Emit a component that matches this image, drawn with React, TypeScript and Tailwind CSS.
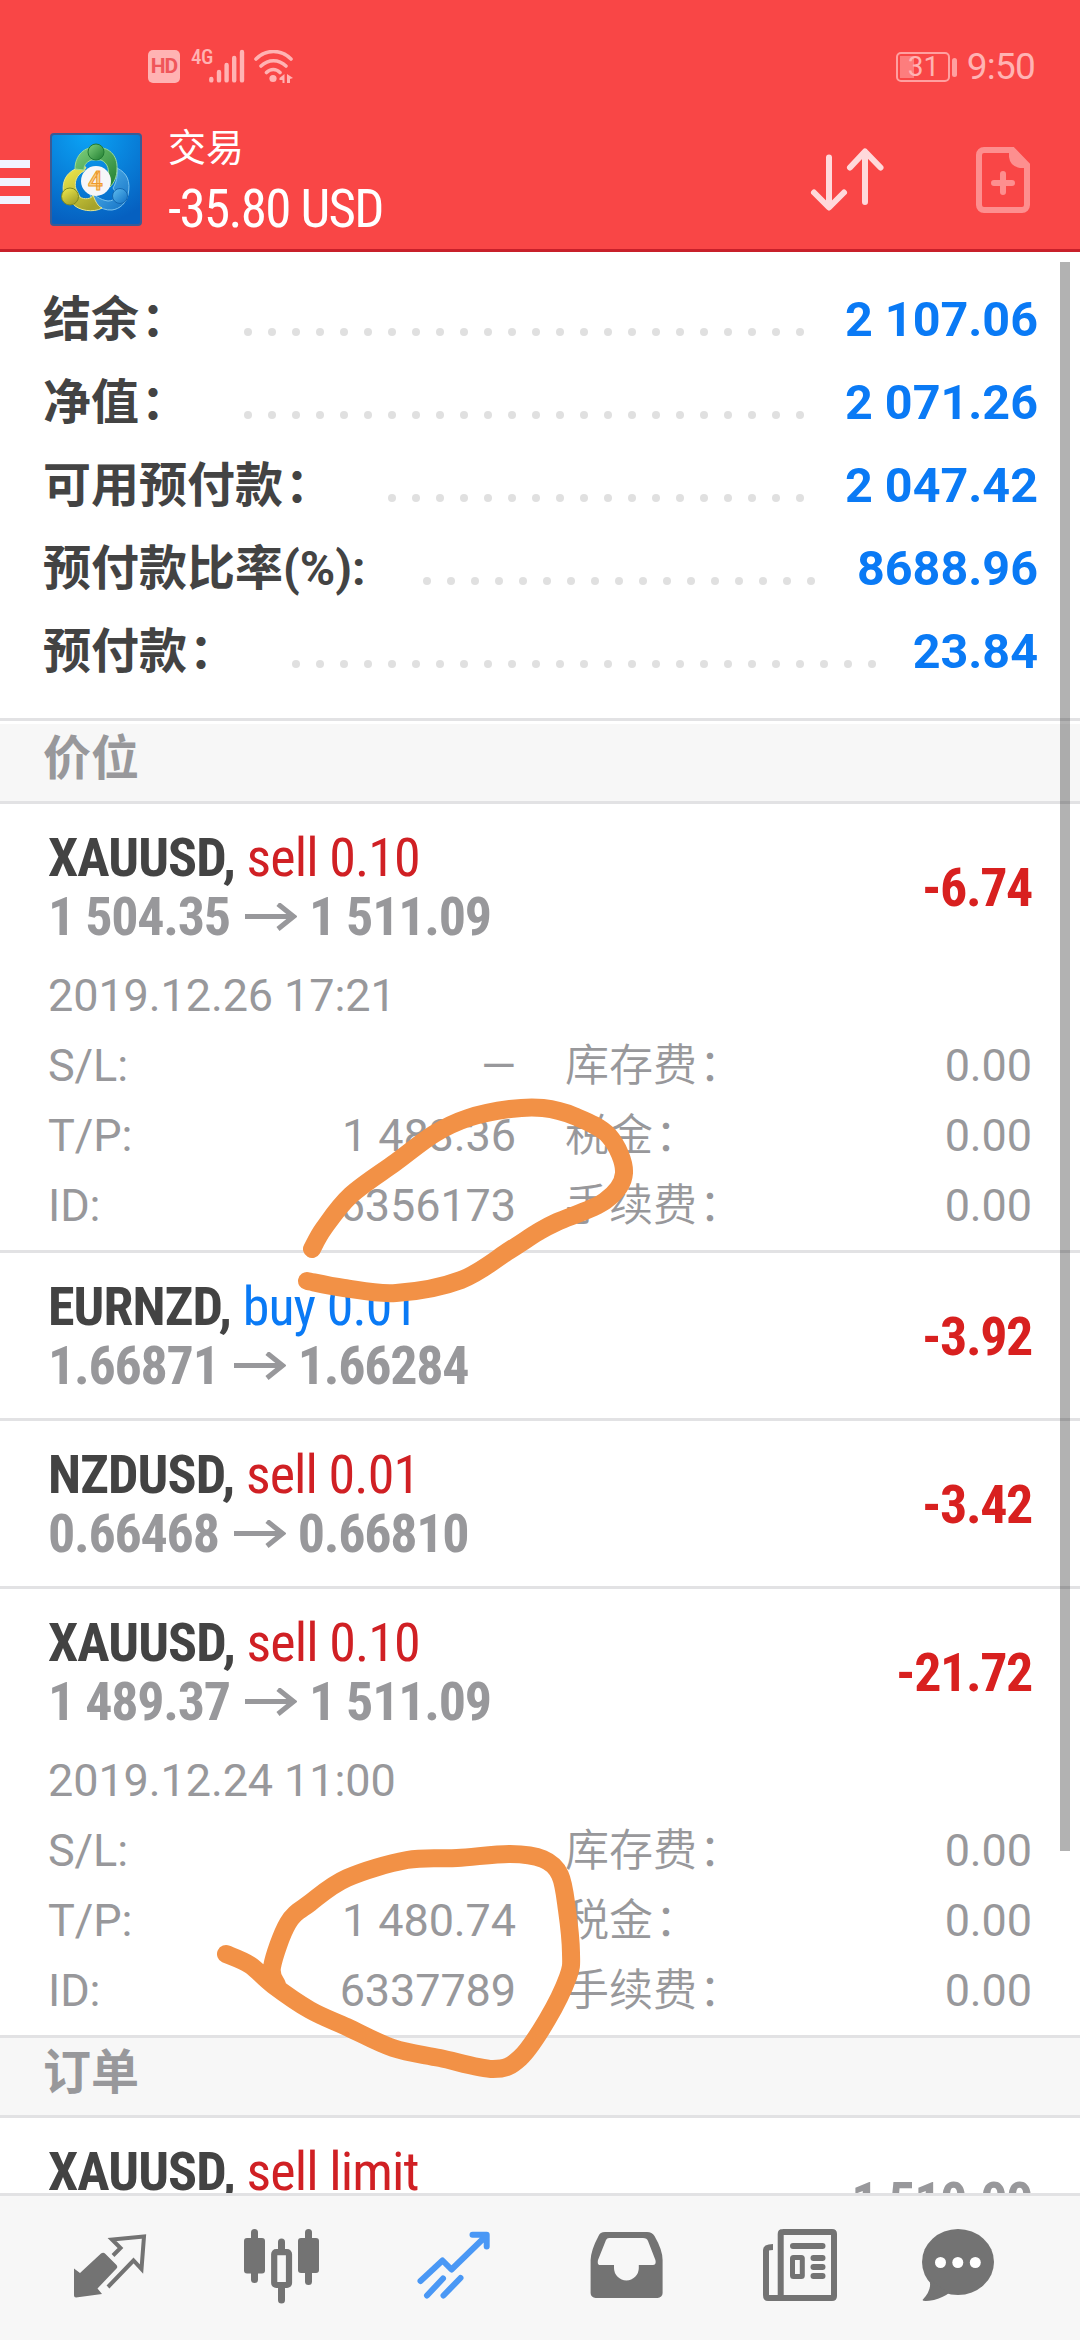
import React from 'react';

interface Position {
    id: string;
    symbol: string;
    side: 'buy' | 'sell';
    volume: string;
    open: string;
    current: string;
    profit: string;
    details?: {
        time: string;
        stopLoss: string;
        takeProfit: string;
    };
}

const summary = [
    { label: '结余：', value: '2 107.06', dots: 24 },
    { label: '净值：', value: '2 071.26', dots: 24 },
    { label: '可用预付款：', value: '2 047.42', dots: 18 },
    { label: '预付款比率(%):', value: '8688.96', dots: 17 },
    { label: '预付款：', value: '23.84', dots: 25 },
];

const positions: Position[] = [
    {
        id: '6356173', symbol: 'XAUUSD', side: 'sell', volume: '0.10', open: '1 504.35', current: '1 511.09', profit: '-6.74',
        details: { time: '2019.12.26 17:21', stopLoss: '—', takeProfit: '1 483.36' },
    },
    { id: '6349001', symbol: 'EURNZD', side: 'buy', volume: '0.01', open: '1.66871', current: '1.66284', profit: '-3.92' },
    { id: '6349002', symbol: 'NZDUSD', side: 'sell', volume: '0.01', open: '0.66468', current: '0.66810', profit: '-3.42' },
    {
        id: '6337789', symbol: 'XAUUSD', side: 'sell', volume: '0.10', open: '1 489.37', current: '1 511.09', profit: '-21.72',
        details: { time: '2019.12.24 11:00', stopLoss: '', takeProfit: '1 480.74' },
    },
];

// Freehand marks, listed as the points the pen went through
const marks: number[][][] = [
    [
        [312, 1249], [324, 1228], [351, 1195], [396, 1162], [434, 1134], [468, 1118], [510, 1109], [543, 1108], [574, 1116],
        [609, 1136], [624, 1173], [605, 1201], [557, 1222], [538, 1232], [510, 1250], [461, 1280], [396, 1293], [344, 1288], [307, 1281],
    ],
    [
        [226, 1954], [250, 1965], [273, 1985], [310, 2010], [347, 2027], [393, 2048], [440, 2058], [493, 2069], [520, 2058],
        [547, 2020], [568, 1977], [571, 1953], [567, 1910], [560, 1875], [543, 1859], [510, 1854], [457, 1858], [407, 1860],
        [347, 1878], [310, 1903], [288, 1923], [272, 1967], [277, 1985],
    ],
];

const smooth = (pts: number[][]) => {
    let d = `M${pts[0][0]} ${pts[0][1]}`;
    for (let i = 0; i < pts.length - 1; i++) {
        const p0 = pts[i - 1] || pts[i];
        const p1 = pts[i];
        const p2 = pts[i + 1];
        const p3 = pts[i + 2] || p2;
        d += ` C${p1[0] + (p2[0] - p0[0]) / 6} ${p1[1] + (p2[1] - p0[1]) / 6} ${p2[0] - (p3[0] - p1[0]) / 6} ${p2[1] - (p3[1] - p1[1]) / 6} ${p2[0]} ${p2[1]}`;
    }
    return d;
};

const StatusBar = () => (
    <div className="flex h-[100px] items-start pl-[148px] pr-[45px] text-[#ffb3b3]">
        <div className="mt-[50px] flex h-[33px] w-8 items-center justify-center rounded-[5px] bg-[#ffb3b3] text-[21px] leading-none font-bold tracking-[-1px] text-[#f0565a]">
            HD
        </div>
        <span className="mt-[49px] ml-[11px] w-[18px] text-[21px] leading-[16px] font-medium tracking-[-0.5px] font-stretch-75%">4G</span>
        <svg className="mt-[49px]" width="36" height="34" viewBox="0 0 36 34" stroke="currentColor" strokeWidth="4.4" strokeLinecap="round">
            <path d="M2.300 30v1.400M10 23v8.400M17.600 16v15.400M25.200 9v22.400M33 3v28.400" />
        </svg>
        <svg className="mt-[50px] ml-[9px]" width="40" height="34" viewBox="0 0 40 34" fill="none" stroke="currentColor" strokeWidth="3.6" strokeLinecap="round">
            <path d="M2 9C12-1 27-1 37 9M7 16C14.500 9 24.500 9 32 16M12.500 22.500c4-4 9.500-4 13.500 0" />
            <circle cx="19" cy="28.500" r="3.600" fill="currentColor" stroke="none" />
            <path d="M30.500 24v9h-2v-3h-3v-2zM33 24l6 4-3 1v4h-3z" fill="currentColor" stroke="none" />
        </svg>
        <div className="flex-1" />
        <div className="mt-[52px] flex h-[30px] w-[54px] rounded-[5px] border-2 border-[#ffa0a0] p-[2px]">
            <div className="flex w-[14px] items-center bg-[#fd7d7d] pl-[8px] text-[28px] leading-none">31</div>
        </div>
        <div className="mt-[58px] ml-[2px] h-[19px] w-[5px] rounded-sm bg-[#ffa0a0]" />
        <span className="mt-[46px] ml-[10px] text-[37px] leading-[42px] tracking-[-0.8px]">9:50</span>
    </div>
);

const AppLogo = () => (
    <svg className="mt-[33px] ml-5" width="92" height="94" viewBox="0 0 92 94">
        <defs>
            <radialGradient id="sky" cx="0.4" cy="0" r="1">
                <stop offset="0" stopColor="#0ba4f6" />
                <stop offset="1" stopColor="#0660c0" />
            </radialGradient>
            <linearGradient id="green" x1="0" y1="0" x2="1" y2="1"><stop offset="0" stopColor="#7fd07c" /><stop offset="1" stopColor="#1f7d30" /></linearGradient>
            <linearGradient id="yellow" x1="0" y1="0" x2="0.6" y2="1"><stop offset="0" stopColor="#f3ec4e" /><stop offset="1" stopColor="#a5a32a" /></linearGradient>
            <linearGradient id="blue" x1="0" y1="0" x2="1" y2="1"><stop offset="0" stopColor="#5dbdf0" /><stop offset="1" stopColor="#1270c4" /></linearGradient>
        </defs>
        <rect x="1" y="1" width="90" height="91" rx="3" fill="url(#sky)" stroke="#3a5b94" strokeWidth="2" />
        <path d="M78 62C81 48 77 40 67 35C68 44 66 50 63 55C68 62 66 68 58 68C50 67 44 62 39 57C40 68 50 78 62 77C70 76 76 70 78 62z" fill="url(#blue)" stroke="#7cc4ee" />
        <path d="M14 62C10 46 20 34 36 34L34 38C26 42 24 50 26 56L30 64C34 67 42 66 43 62C46 70 48 73 52 75C44 80 28 78 22 70z" fill="url(#yellow)" stroke="#e6e58c" />
        <path d="M25 36C25 22 35 13 46 15C58 13 68 22 67 36C67 44 64 50 60 54L57 44C60 38 58 30 51 27L41 27C35 30 34 33 34 37z" fill="url(#green)" stroke="#9cdb97" />
        <circle cx="46" cy="19" r="8" fill="url(#green)" stroke="#217a33" />
        <circle cx="20" cy="63.500" r="8.500" fill="url(#yellow)" stroke="#7e8a22" />
        <circle cx="70" cy="63" r="7.500" fill="url(#blue)" stroke="#1467b0" />
        <circle cx="46" cy="48" r="15" fill="#f6f6f9" />
        <text x="45.500" y="57" textAnchor="middle" fontFamily="Roboto" fontSize="26" fontWeight="500" fill="#fbd08a" stroke="#ee9a2c">4</text>
    </svg>
);

const Header = () => (
    <div className="flex h-[149px] items-start text-white">
        <div className="mt-[60px] flex w-[30px] flex-col gap-[10px]">
            <div className="h-2 bg-[#f1f4ff]" />
            <div className="h-2 bg-[#f1f4ff]" />
            <div className="h-2 bg-[#f1f4ff]" />
        </div>
        <AppLogo />
        <div className="ml-[26px] flex flex-1 flex-col">
            <span className="mt-[22px] text-[38px] leading-[52px]">交易</span>
            <span className="mt-[4px] text-[53px] leading-[62px] font-[440] tracking-[-1.65px] font-stretch-75%">-35.80 USD</span>
        </div>
        <svg className="mt-[45px]" width="76" height="70" viewBox="0 0 76 70" fill="none" stroke="#ffd9db" strokeWidth="6" strokeLinecap="round" strokeLinejoin="round">
            <path d="M20 12.500V62M5 47.500l15 15 15-15M56 57V8M41 22.500L56 6.500l15.500 16" />
        </svg>
        <svg className="mt-[45px] ml-[89px] mr-[46px]" width="60" height="72" viewBox="0 0 60 72" fill="none" stroke="#fd8f8f">
            <path d="M10 5H38.500L53 20V60a5 5 0 0 1-5 5H10a5 5 0 0 1-5-5V10a5 5 0 0 1 5-5z" strokeWidth="6" />
            <path d="M35 4h6L55 19v4H46q-10-2-11-11z" fill="#fd8f8f" stroke="none" />
            <path d="M29 29v18M20 38h18" strokeWidth="6" strokeLinecap="round" />
        </svg>
    </div>
);

const SectionTitle = ({ children }: { children: React.ReactNode }) => (
    <div className="h-20 border-b-[3px] border-[#e2e2e4] bg-[#f7f7f7] pl-[43px] text-[48px] leading-[69px] font-bold text-[#98989b]">{children}</div>
);

// The full-width colon is kept apart so that it is not pulled onto the word before it
const Label = ({ text, className }: { text: string; className: string }) => {
    const wide = text.endsWith('：');
    return (
        <span className={className}>
            {wide ? text.slice(0, -1) : text}
            {wide && <span className="-mr-[2px] ml-[2px]">：</span>}
        </span>
    );
};

const PriceArrow = () => (
    <svg className="mr-[12px] ml-[15px] inline-block align-baseline" width="52" height="32" viewBox="0 0 52 32" fill="none" stroke="currentColor" strokeWidth="5">
        <path d="M0 13.500H48M33 1L48.500 13.500 33 26" />
    </svg>
);

const DetailRow = ({ label, value, label2 }: { label: string; value: string; label2: string }) => (
    <div className="flex">
        <span className="w-20">{label}</span>
        <span className="w-[388px] text-right">{value}</span>
        <Label text={label2} className="ml-[49px] flex-1 text-[44px] font-[350] tracking-normal" />
        <span>0.00</span>
    </div>
);

const PositionRow = ({ position }: { position: Position }) => {
    const { symbol, side, volume, open, current, profit, details, id } = position;
    return (
        <div className="border-b-[3px] border-[#e2e2e4] pt-6 pl-12 pr-[48px]">
            <div className="flex items-center justify-between pb-[5px]">
                <div className="text-[54px] leading-[59px] whitespace-nowrap font-stretch-75%">
                    <div className="tracking-[-0.9px]">
                        <span className="font-bold text-[#434343]">{symbol}, </span>
                        <span className={side === 'sell' ? 'font-[440] text-[#d02024]' : 'font-[440] text-[#0a7af5]'}>{side} {volume}</span>
                    </div>
                    <div className="font-bold tracking-[-1.25px] text-[#98989b]">
                        {open}<PriceArrow />{current}
                    </div>
                </div>
                <span className="text-[54px] leading-[59px] font-bold tracking-[-1.4px] text-[#d8201f] font-stretch-75%">{profit}</span>
            </div>
            {details ? (
                <div className="mt-[10px] pb-[9px] text-[45px] leading-[70px] font-[375] tracking-[-0.1px] text-[#98989b]">
                    <div>{details.time}</div>
                    <DetailRow label="S/L:" value={details.stopLoss} label2="库存费：" />
                    <DetailRow label="T/P:" value={details.takeProfit} label2="税金：" />
                    <DetailRow label="ID:" value={id} label2="手续费：" />
                </div>
            ) : (
                <div className="h-[18px]" />
            )}
        </div>
    );
};

const NavBar = () => (
    <div className="grid h-[147px] shrink-0 grid-cols-6 justify-items-center border-t-[3px] border-[#e2e2e4] bg-[#f7f7f7] px-6 pt-[29px] text-[#737373]">
        <svg width="80" height="80" viewBox="0 0 80 80">
            <path d="M4 43.500L10 48 31 28.500q2.500-1.500 4.500.5L46.500 40q1.500 2 0 3.500L27.500 63.500 32 69 6 72.500q-2 0-2-2z" fill="currentColor" />
            <path d="M43 30.500L50.500 23 42 14.500 74 11.500 71.500 44 63.500 35.500 38 62" fill="none" stroke="currentColor" strokeWidth="4" />
        </svg>
        <svg width="80" height="80" viewBox="0 0 80 80" fill="currentColor">
            <rect x="9" y="4" width="7" height="54" rx="3.500" />
            <rect x="2" y="13" width="21" height="35.500" rx="3" />
            <rect x="63" y="4" width="7" height="56" rx="3.500" />
            <rect x="56" y="13" width="21" height="35" rx="3" />
            <rect x="36" y="13.500" width="7" height="14" rx="3.500" />
            <rect x="36" y="60" width="7" height="18.500" rx="3.500" />
            <rect x="32.200" y="27.200" width="14.800" height="32.800" rx="2" fill="none" stroke="currentColor" strokeWidth="6.200" />
        </svg>
        <svg width="80" height="80" viewBox="0 0 80 80" fill="none" stroke="#4a98f5" strokeWidth="6" strokeLinecap="round" strokeLinejoin="round">
            <path d="M6.500 56L28.500 35.500 37.500 44.500 72 11M58.500 9.700H72.700V21.500M13 70.500L29 53.500M29.500 70.500L46.500 53" />
        </svg>
        <svg width="80" height="80" viewBox="0 0 80 80">
            <path fill="currentColor" fillRule="evenodd" d="M19 7H61Q66 7 68.500 11Q76.600 25 76.600 35V68a5 5 0 0 1-5 5H9.600a5 5 0 0 1-5-5V35Q5 25 12.500 11Q14 7 19 7zM23 13Q21 13 20 15L12 35Q11 40 14 40H28V43a12.400 12.400 0 0 0 24.800 0V40H67Q70.500 40 69.400 35L62 16Q61 13 57 13z" />
        </svg>
        <svg width="80" height="80" viewBox="0 0 80 80" fill="none" stroke="currentColor" strokeWidth="6">
            <path d="M24.600 7H74q2 0 2 2V71q0 2-2 2H10q-2 0-2-3V25q0-3 7-3M22.700 73V9q0-2 2-2" />
            <path d="M35 21H64.500M55.500 33H64.500M55.500 42H64.500M55.500 51H64.500" strokeLinecap="round" />
            <rect x="34.500" y="32.500" width="9.800" height="19" rx="1" strokeWidth="5" />
        </svg>
        <svg className="-ml-6" width="80" height="80" viewBox="0 0 80 80">
            <ellipse cx="40" cy="37" rx="36" ry="33" fill="currentColor" />
            <path d="M11 54Q15 64 4.500 75Q5 77 16 75Q26 72 31 68z" fill="currentColor" />
            <g fill="#fff">
                <circle cx="22.500" cy="37.500" r="5.500" />
                <circle cx="39.800" cy="37.500" r="5.500" />
                <circle cx="57.300" cy="37.500" r="5.500" />
            </g>
        </svg>
    </div>
);

const App = () => (
    <div className="relative flex h-[2340px] w-[1080px] flex-col overflow-hidden bg-white font-['Roboto','Noto_Sans_CJK_SC',sans-serif]" lang="zh-CN">
        <div className="h-[252px] shrink-0 border-b-[3px] border-[#c8202a] bg-[#f94646]">
            <StatusBar />
            <Header />
        </div>

        <div className="min-h-0 flex-1 overflow-hidden">
            <div className="border-b-[3px] border-[#e2e2e4] pt-[26px] pb-[25px]">
                {summary.map(item => (
                    <div key={item.label} className="flex h-[83px] pr-[42px] pl-[43px] leading-[83px] font-bold whitespace-nowrap">
                        <Label text={item.label} className="shrink-0 text-[48px] text-[#434343]" />
                        <div className="ml-[49px] flex flex-1 items-center pt-6">
                            {Array.from({ length: item.dots }, (_, i) => (
                                <i key={i} className="mx-2 size-2 shrink-0 rounded-full bg-[#e0e0e0]" />
                            ))}
                        </div>
                        <span className="text-[48.5px] text-[#0a7af5]">{item.value}</span>
                    </div>
                ))}
            </div>
            <div className="h-[3px]" />
            <SectionTitle>价位</SectionTitle>
            {positions.map(position => (
                <PositionRow key={position.id} position={position} />
            ))}
            <SectionTitle>订单</SectionTitle>
            <div className="flex h-[165px] items-start justify-between pt-6 pl-12 pr-[48px] text-[54px] leading-[59px] whitespace-nowrap font-stretch-75%">
                <div className="tracking-[-0.9px]">
                    <span className="font-bold text-[#434343]">XAUUSD, </span>
                    <span className="font-[440] text-[#d02024]">sell limit</span>
                </div>
                <span className="mt-[30px] font-bold tracking-[-1.4px] text-[#98989b]">1 510.00</span>
            </div>
        </div>
        <NavBar />

        <div className="absolute top-[262px] right-[10px] h-[1589px] w-[10px] bg-black/30" />
        <svg className="absolute top-0 left-0" width="1080" height="2340" viewBox="0 0 1080 2340" fill="none" stroke="#f29146" strokeWidth="18" strokeLinecap="round" strokeLinejoin="round">
            {marks.map((points, i) => (
                <path key={i} d={smooth(points)} />
            ))}
        </svg>
    </div>
);

export default App;
